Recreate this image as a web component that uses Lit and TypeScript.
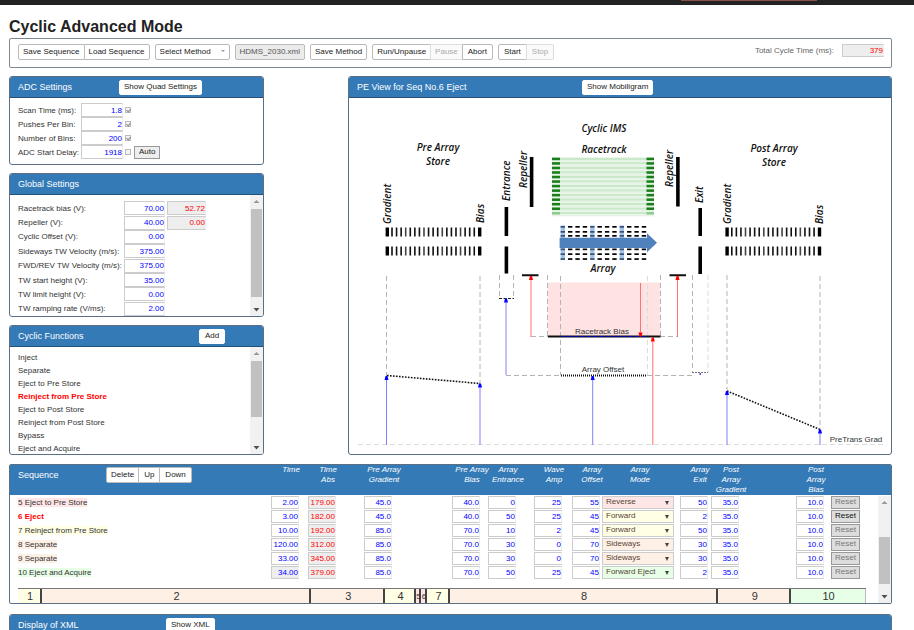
import { LitElement, html, svg, css } from "lit";
import { customElement } from "lit/decorators.js";
import { classMap } from "lit/directives/class-map.js";
import { styleMap } from "lit/directives/style-map.js";

interface Setting { id: string; label: string; value: string; readback?: string }
interface Step {
  name: string; tone: string; mode: string; active?: boolean; locked?: boolean;
  time: string; abs: string; preGradient: string; preBias: string; entrance: string;
  wave: string; offset: string; exit: string; postGradient: string; postBias: string;
}

const ADC = [
  { id: "scan", label: "Scan Time (ms):", value: "1.8", on: true },
  { id: "pushes", label: "Pushes Per Bin:", value: "2", on: true },
  { id: "bins", label: "Number of Bins:", value: "200", on: true },
  { id: "delay", label: "ADC Start Delay:", value: "1918", on: false },
];

const GLOBALS: Setting[] = [
  { id: "bias", label: "Racetrack bias (V):", value: "70.00", readback: "52.72" },
  { id: "repeller", label: "Repeller (V):", value: "40.00", readback: "0.00" },
  { id: "cyclic", label: "Cyclic Offset (V):", value: "0.00" },
  { id: "sideways", label: "Sideways TW Velocity (m/s):", value: "375.00" },
  { id: "fwdrev", label: "FWD/REV TW Velocity (m/s):", value: "375.00" },
  { id: "start", label: "TW start height (V):", value: "35.00" },
  { id: "limit", label: "TW limit height (V):", value: "0.00" },
  { id: "ramp", label: "TW ramping rate (V/ms):", value: "2.00" },
];

const FUNCTIONS = [
  "Inject", "Separate", "Eject to Pre Store", "Reinject from Pre Store",
  "Eject to Post Store", "Reinject from Post Store", "Bypass", "Eject and Acquire",
];

const step = (name: string, tone: string, mode: string, v: string[], extra = {}): Step => ({
  name, tone, mode,
  time: v[0], abs: v[1], preGradient: v[2], preBias: v[3], entrance: v[4],
  wave: v[5], offset: v[6], exit: v[7], postGradient: v[8], postBias: v[9], ...extra,
});

const STEPS: Step[] = [
  step("5 Eject to Pre Store", "pink", "Reverse", ["2.00", "179.00", "45.0", "40.0", "0", "25", "55", "50", "35.0", "10.0"]),
  step("6 Eject", "yellow", "Forward", ["3.00", "182.00", "45.0", "40.0", "50", "25", "45", "2", "35.0", "10.0"], { active: true }),
  step("7 Reinject from Pre Store", "yellow", "Forward", ["10.00", "192.00", "85.0", "70.0", "10", "2", "45", "50", "35.0", "10.0"]),
  step("8 Separate", "peach", "Sideways", ["120.00", "312.00", "85.0", "70.0", "30", "0", "70", "30", "35.0", "10.0"]),
  step("9 Separate", "peach", "Sideways", ["33.00", "345.00", "85.0", "70.0", "30", "0", "70", "30", "35.0", "10.0"]),
  step("10 Eject and Acquire", "green", "Forward Eject", ["34.00", "379.00", "85.0", "70.0", "50", "25", "45", "2", "35.0", "10.0"], { locked: true }),
];

const HEADS: [string, string[]][] = [
  ["c-time", ["Time"]], ["c-abs", ["Time", "Abs"]], ["c-pg", ["Pre Array", "Gradient"]],
  ["c-pb", ["Pre Array", "Bias"]], ["c-en", ["Array", "Entrance"]], ["c-wave", ["Wave", "Amp"]],
  ["c-off", ["Array", "Offset"]], ["c-mode", ["Array", "Mode"]], ["c-exit", ["Array", "Exit"]],
  ["c-qg", ["Post", "Array", "Gradient"]], ["c-qb", ["Post", "Array", "Bias"]], ["c-reset", []],
];

const TIMELINE = [
  { n: "1", share: 24, tone: "yellow" }, { n: "2", share: 270, tone: "peach" },
  { n: "3", share: 74, tone: "peach" }, { n: "4", share: 31, tone: "yellow" },
  { n: "5", share: 5, tone: "pink" }, { n: "6", share: 6, tone: "pink" },
  { n: "7", share: 23, tone: "yellow" }, { n: "8", share: 269, tone: "peach" },
  { n: "9", share: 73, tone: "peach" }, { n: "10", share: 75, tone: "green" },
];

const controls = css`
  * { box-sizing: border-box; }
  button, input, select {
    font: 8px/10px "Liberation Sans", Arial, sans-serif;
    margin: 0;
    padding: 0;
    color: #222;
    border-radius: 0;
  }
  .btn {
    height: 16px;
    padding: 0 4px;
    border: 1px solid #bbb;
    border-radius: 2px;
    background: #fff;
    white-space: nowrap;
  }
  .btn.short { padding: 0 5px; }
  .btn.file { background: #ebebeb; color: #555; }
  .btn:disabled { color: #aaa; border-color: #ddd; background: #fafafa; }
  .field {
    height: 14px;
    border: 1px solid #ccc;
    border-right-color: #eee;
    background: #fff;
    color: #00f;
    text-align: right;
  }
  .field.read { background: #eee; color: #f00; }
  .pink { background: #ffe6e6; }
  .yellow { background: #ffffe6; }
  .peach { background: #fff0e6; }
  .green { background: #e6ffe6; }
`;

@customElement("scroll-rail")
export class ScrollRail extends LitElement {
  static properties = { before: { type: Number }, thumb: { type: Number }, after: { type: Number } };
  declare before: number;
  declare thumb: number;
  declare after: number;
  static styles = css`
    :host { display: flex; flex-direction: column; width: 13px; background: #f1f1f1; }
    .arrow { flex: none; width: 13px; height: 13px; }
    .up { fill: #999; }
    .down { fill: #505050; }
    .thumb { margin: 0 1px; background: #c1c1c1; }
  `;
  render() {
    return html`
      <svg class="arrow up" viewBox="0 0 13 13"><path d="M3.5 8 6.5 5l3 3z" /></svg>
      <div style=${styleMap({ flex: `${this.before} 0 0` })}></div>
      <div class="thumb" style=${styleMap({ flex: `${this.thumb} 0 0` })}></div>
      <div style=${styleMap({ flex: `${this.after} 0 0` })}></div>
      <svg class="arrow down" viewBox="0 0 13 13"><path d="M3.5 5h6l-3 3.5z" /></svg>`;
  }
}

@customElement("potential-diagram")
export class PotentialDiagram extends LitElement {
  static styles = css`
    :host { display: block; }
    svg { display: block; width: 100%; }
    .cap { font: italic 600 10px "Open Sans", "Noto Sans", sans-serif; fill: #111; text-anchor: middle; }
    .side { font: italic 600 10px "Open Sans", "Noto Sans", sans-serif; fill: #111; }
    .note { font: 8px "Liberation Sans", Arial, sans-serif; fill: #333; text-anchor: middle; }
    .guide { stroke: #b4b4b4; stroke-dasharray: 5 3; fill: none; }
    .guide.faint { stroke: #dcdcdc; }
    .dots { stroke: #111; stroke-width: 2; stroke-dasharray: 1 1; fill: none; }
    .slope { stroke: #111; stroke-width: 1.6; stroke-dasharray: 1.6 1.4; }
    .blue { stroke: #8080ff; }
    .blue-head { fill: #00f; }
    .red { stroke: #ff7070; }
    .red-head { fill: #f00; }
  `;

  private comb(x: number) {
    return [227.5, 246.5].map((y) => svg`
      <rect x=${x} y=${y} width="3.4" height="9" fill="#000" />
      <rect x=${x + 92.4} y=${y} width="3.4" height="9" fill="#000" />
      ${Array.from({ length: 19 }, (_, i) => svg`
        <rect x=${x + 5.6 + i * 4.57} y=${y} width="1.6" height="9" fill=${i % 4 === 3 ? "#444" : "#111"} />`)}`);
  }

  private racetrack() {
    return Array.from({ length: 13 }, (_, i) => {
      const y = 157.6 + i * 4.53;
      const dark = i === 12 ? "#8fca8f" : "#1a7f1a";
      return svg`
        <rect x="560" y=${y} width="87" height="2.4" fill="#cbe8cb" />
        <rect x="552" y=${y + 2.4} width="102" height="2" fill="#e6f4e6" />
        <rect x="552" y=${y} width="8" height="2.6" fill=${dark} />
        <rect x="646.5" y=${y} width="7.5" height="2.6" fill=${dark} />`;
    });
  }

  private array() {
    return Array.from({ length: 12 }, (_, i) => {
      const x = 560.6 + i * 7.38;
      const lens = i % 4 === 0;
      return svg`
        ${lens ? svg`<rect x=${x} y="225.5" width="4.4" height="34.5" fill="#a9c3e3" />` : null}
        ${[226, 231, 235, 248.5, 253.3, 258.2].map((y) => svg`
          <rect x=${x} y=${y} width="4.4" height="1.7" fill=${lens ? "#33527d" : "#000"} />`)}`;
    });
  }

  private arrow(x: number, from: number, to: number, tone: string) {
    const d = to < from ? 4 : -4;
    return svg`
      <path class=${tone} d="M${x} ${from}V${to + d}" />
      <path class="${tone}-head" d="M${x - 2} ${to + d}h4l-1 ${-d}h-2z" />`;
  }

  private side(x: number, y: number, text: string) {
    return svg`<text class="side" transform="translate(${x} ${y}) rotate(-90)">${text}</text>`;
  }

  render() {
    return html`<svg viewBox="349 98 542 356" role="img" aria-label="Potential energy view">
      <text class="cap" x="604" y="132">Cyclic IMS</text>
      <text class="cap" x="604" y="153">Racetrack</text>
      <text class="cap" x="438" y="151">Pre Array</text>
      <text class="cap" x="438" y="165">Store</text>
      <text class="cap" x="774" y="152">Post Array</text>
      <text class="cap" x="774" y="166">Store</text>
      <text class="cap" x="603" y="272">Array</text>
      ${this.side(391, 224, "Gradient")} ${this.side(484, 223, "Bias")}
      ${this.side(510, 201, "Entrance")} ${this.side(527, 188, "Repeller")}
      ${this.side(673, 187, "Repeller")} ${this.side(703, 203, "Exit")}
      ${this.side(731, 224, "Gradient")} ${this.side(823, 224, "Bias")}
      ${this.comb(385.6)} ${this.comb(725.4)}
      <path d="M506.4 207v29M506.4 246.5v27M531.6 157v50M677.9 157v49.5M700.2 208v28M700.2 246.5v27.5" stroke="#000" stroke-width="3.6" />
      ${this.racetrack()} ${this.array()}
      <path d="M559.6 237.8H647V233.3L657 242.8 647 252.3V248H559.6z" fill="#4f81bd" />

      <rect x="547.5" y="282.5" width="113" height="54" fill="#ffe3e3" />
      <path class="guide" d="M386.5 276V376M480 276V383M547.5 275V336M560.5 276V375M660.5 275V336M692.5 275V373M727 275V390M820 276V429M531 336.5H548M660 336.5H677M506 375.5H561M647 375.5H692M499.5 275V298M513.5 275V298" />
      <path class="guide faint" d="M647.5 276V375M708 275V373M358 444.5H884" />
      <path d="M522 275.3H538.5M669.5 275.3H686M548 336.5H660.5" stroke="#111" stroke-width="2" />
      <path d="M561 336.5H647" stroke="#00c" stroke-width="1" stroke-dasharray="2 1" />
      <path class="dots" d="M561 375.5H647" />
      <path d="M499 298.5H514" stroke="#222" stroke-dasharray="3 1.5" />
      <path d="M692 372.5H708" stroke="#777" stroke-dasharray="2 1" />
      <rect x="699.5" y="373" width="1.5" height="2" fill="#44f" />
      <path class="slope" d="M387 375.5 480 383.5" />
      <path class="slope" d="M727 391 820 429.5" />
      ${this.arrow(386.5, 445, 376, "blue")} ${this.arrow(480, 445, 383.5, "blue")}
      ${this.arrow(506, 375, 298.5, "blue")} ${this.arrow(592.7, 445, 376, "blue")}
      ${this.arrow(727, 445, 391, "blue")} ${this.arrow(820, 445, 429.5, "blue")}
      ${this.arrow(531, 337, 276, "red")} ${this.arrow(677.5, 337, 276, "red")}
      ${this.arrow(640.5, 283, 336.5, "red")} ${this.arrow(652.8, 445, 337.5, "red")}
      <text class="note" x="602" y="334">Racetrack Bias</text>
      <text class="note" x="603" y="372">Array Offset</text>
      <text class="note" x="856" y="442">PreTrans Grad</text>
    </svg>`;
  }
}

@customElement("app-root")
export class AppRoot extends LitElement {
  static styles = [controls, css`
    :host {
      display: block;
      height: 100vh;
      overflow: hidden;
      background: #fff;
      color: #333;
      font: 8px/13px "Liberation Sans", Arial, sans-serif;
    }
    .top { height: 5px; background: #222; display: flex; justify-content: flex-end; }
    .tab { width: 136px; height: 1px; margin-right: 97px; background: #8a4f4c; }
    main { padding: 12px 22px 0 9px; }
    h1 { margin: 0 0 1px; font-size: 16px; line-height: 20px; color: #222; }
    h2 { margin: 0; font-size: 9px; line-height: 20px; font-weight: 400; color: #fff; }
    .toolbar {
      display: flex;
      align-items: flex-start;
      gap: 5px;
      height: 30px;
      padding: 5px 7px 0 8px;
      border: 1px solid #7d8894;
      border-radius: 2px;
    }
    .group { display: flex; }
    .group .btn + .btn { margin-left: -1px; }
    .group .btn:not(:last-child) { border-top-right-radius: 0; border-bottom-right-radius: 0; }
    .group .btn:not(:first-child) { border-top-left-radius: 0; border-bottom-left-radius: 0; }
    .total { margin-left: auto; color: #666; display: flex; gap: 8px; }
    .total .field { width: 42px; height: 13px; }
    .pick { position: relative; display: block; }
    .pick select { appearance: none; display: block; width: 100%; }
    .pick::after {
      content: "";
      position: absolute;
      right: 5px;
      top: 5px;
      border: 2px solid transparent;
      border-top: 4px solid #444;
      border-bottom: 0;
      pointer-events: none;
    }
    .pick.method { width: 75px; }
    .pick.method::after { border-top: 2px solid #999; top: 6px; }

    .columns {
      display: grid;
      grid-template-columns: 255px minmax(0, 1fr);
      gap: 84px;
      margin-top: 8px;
    }
    .stack { display: flex; flex-direction: column; gap: 8px; }
    .panel { border: 1px solid #5b6f84; border-radius: 3px; overflow: hidden; }
    .bar {
      display: flex;
      align-items: center;
      height: 21px;
      padding: 0 8px;
      background: #337ab7;
      border-bottom: 1px solid #234f78;
    }
    .bar .btn { height: 15px; border-color: #fff; }
    .bar h2.title-adc { width: 101px; }
    .bar h2.title-pe { flex: 0 0 225px; }
    .bar h2.title-fn { width: 181px; }
    .bar h2.title-xml { width: 148px; }
    .adc { display: grid; grid-auto-rows: 1fr; height: 66px; padding: 5px 8px; }
    .adc-row { display: grid; grid-template-columns: 61px 42px 7px auto; align-items: center; gap: 2px; justify-content: start; }
    .adc-row .btn { height: 13px; border-color: #999; background: #eee; border-radius: 0; }
    .tick { appearance: none; width: 6px; height: 6px; border: 1px solid #bbb; background: #f4f4f4; }
    .tick:checked::before { content: ""; display: block; width: 2px; height: 3px; margin-left: 1px; border: solid #888; border-width: 0 1px 1px 0; rotate: 40deg; }
    .scroller { display: grid; grid-template-columns: minmax(0, 1fr) 13px; }
    .globals { display: grid; grid-template-rows: repeat(8, minmax(0, 1fr)); height: 121px; padding: 6px 8px 0; }
    .global-row { display: grid; grid-template-columns: 106px 41px 41px; align-items: center; }
    .global-row .read { margin-left: 2px; }
    ul { list-style: none; margin: 0; padding: 4px 8px 0; height: 107px; line-height: 13px; overflow: hidden; }
    li.current { color: #f00; font-weight: 700; }

    .sequence { position: relative; margin-top: 9px; height: 140px; border-radius: 2px; }
    .sequence > scroll-rail { position: absolute; right: 0; top: 31px; bottom: 0; }
    table { width: 100%; table-layout: fixed; border-collapse: collapse; }
    th { padding: 0; height: 30px; background: #337ab7; color: #fff; font-weight: 400; font-style: italic; line-height: 10px; vertical-align: top; text-align: left; }
    .c-name { font-style: normal; }
    .head { display: flex; align-items: flex-start; padding: 2px 8px 0; }
    .head h2 { width: 88px; line-height: 16px; }
    .caption { display: block; width: 40px; text-align: center; white-space: nowrap; }
    .c-mode .caption { width: 76px; }
    .c-time { width: 37px; } .c-abs { width: 56px; } .c-pg { width: 88px; }
    .c-pb { width: 36px; } .c-en { width: 46px; } .c-wave { width: 38px; }
    .c-off { width: 30px; } .c-mode { width: 78px; } .c-exit { width: 31px; }
    .c-qg { width: 85px; } .c-qb { width: 35px; } .c-reset { width: 60px; }
    td { padding: 0; height: 14px; vertical-align: middle; }
    .step { padding-left: 8px; }
    .active .name { color: #f00; background: none; font-weight: 700; }
    td .field { display: block; width: 28px; height: 13px; }
    td .pick { width: 72px; }
    td select { height: 13px; border: 1px solid #ccc; padding-left: 3px; color: #543; }
    td .reset { display: block; width: 29px; height: 13px; padding: 0; color: #777; border: 1px solid #999; background: #ddd; }
    .active .reset { color: #111; }
    .locked .time { background: #eee; }
    .timeline { display: flex; margin: 9px 25px 0 8px; height: 16px; border-top: 1px solid #777; }
    .segment { min-width: 0; box-shadow: inset -2px 0 #444; font-size: 11px; line-height: 15px; text-align: center; overflow: hidden; }
    .segment.pink { font-size: 8px; }
    .segment:last-child { box-shadow: inset -1px 0 #bbb; }
    .xml { margin-top: 10px; }
  `];

  private cell(row: Step, key: keyof Step, label: string, extra = "") {
    return html`<td><input class="field ${extra}" aria-label="${label}, ${row.name}"
      .value=${String(row[key])} ?readonly=${extra === "read"} /></td>`;
  }

  private row(r: Step) {
    return html`<tr class=${classMap({ active: !!r.active, locked: !!r.locked })}>
      <td class="step"><span class="name ${r.tone}">${r.name}</span></td>
      ${this.cell(r, "time", "Time", "time")}
      ${this.cell(r, "abs", "Absolute time", "read")}
      ${this.cell(r, "preGradient", "Pre array gradient")}
      ${this.cell(r, "preBias", "Pre array bias")}
      ${this.cell(r, "entrance", "Array entrance")}
      ${this.cell(r, "wave", "Wave amp")}
      ${this.cell(r, "offset", "Array offset")}
      <td><span class="pick"><select class=${r.tone} aria-label="Array mode, ${r.name}"><option>${r.mode}</option></select></span></td>
      ${this.cell(r, "exit", "Array exit")}
      ${this.cell(r, "postGradient", "Post array gradient")}
      ${this.cell(r, "postBias", "Post array bias")}
      <td><button class="reset">Reset</button></td>
    </tr>`;
  }

  render() {
    return html`
      <div class="top"><div class="tab"></div></div>
      <main>
        <h1>Cyclic Advanced Mode</h1>
        <div class="toolbar">
          <div class="group"><button class="btn">Save Sequence</button><button class="btn">Load Sequence</button></div>
          <span class="pick method"><select class="btn" aria-label="Method"><option>Select Method</option></select></span>
          <button class="btn file">HDMS_2030.xml</button>
          <button class="btn">Save Method</button>
          <div class="group"><button class="btn">Run/Unpause</button><button class="btn" disabled>Pause</button><button class="btn short">Abort</button></div>
          <div class="group"><button class="btn short">Start</button><button class="btn short" disabled>Stop</button></div>
          <label class="total">Total Cycle Time (ms): <input class="field read" readonly .value=${"379"} /></label>
        </div>

        <div class="columns">
          <div class="stack">
            <section class="panel">
              <div class="bar"><h2 class="title-adc">ADC Settings</h2><button class="btn">Show Quad Settings</button></div>
              <div class="adc">
                ${ADC.map((s) => html`<div class="adc-row">
                  <label for=${s.id}>${s.label}</label>
                  <input class="field" id=${s.id} .value=${s.value} />
                  <input class="tick" type="checkbox" aria-label="Use ${s.label}" .checked=${s.on} />
                  ${s.id === "delay" ? html`<button class="btn">Auto</button>` : null}
                </div>`)}
              </div>
            </section>

            <section class="panel">
              <div class="bar"><h2>Global Settings</h2></div>
              <div class="scroller">
                <div class="globals">
                  ${GLOBALS.map((s) => html`<div class="global-row">
                    <label for=${s.id}>${s.label}</label>
                    <input class="field" id=${s.id} .value=${s.value} />
                    ${s.readback ? html`<input class="field read" readonly aria-label="${s.label} readback" .value=${s.readback} />` : null}
                  </div>`)}
                </div>
                <scroll-rail before="1" thumb="88" after="6"></scroll-rail>
              </div>
            </section>

            <section class="panel">
              <div class="bar"><h2 class="title-fn">Cyclic Functions</h2><button class="btn short">Add</button></div>
              <div class="scroller">
                <ul>${FUNCTIONS.map((f, i) => html`<li class=${classMap({ current: i === 3 })}>${f}</li>`)}</ul>
                <scroll-rail before="1" thumb="56" after="24"></scroll-rail>
              </div>
            </section>
          </div>

          <section class="panel">
            <div class="bar"><h2 class="title-pe">PE View for Seq No.6 Eject</h2><button class="btn">Show Mobiligram</button></div>
            <potential-diagram></potential-diagram>
          </section>
        </div>

        <section class="panel sequence">
          <table>
            <thead><tr>
              <th class="c-name"><div class="head"><h2>Sequence</h2>
                <div class="group"><button class="btn">Delete</button><button class="btn short">Up</button><button class="btn short">Down</button></div></div></th>
              ${HEADS.map(([cls, lines]) => html`<th class=${cls}><span class="caption">${lines.map((l) => html`${l}<br />`)}</span></th>`)}
            </tr></thead>
            <tbody>${STEPS.map((r) => this.row(r))}</tbody>
          </table>
          <div class="timeline">
            ${TIMELINE.map((t) => html`<div class="segment ${t.tone}" style=${styleMap({ flex: `${t.share} 0 0` })}>${t.n}</div>`)}
          </div>
          <scroll-rail before="28" thumb="48" after="6"></scroll-rail>
        </section>

        <section class="panel xml">
          <div class="bar"><h2 class="title-xml">Display of XML</h2><button class="btn">Show XML</button></div>
        </section>
      </main>`;
  }
}
